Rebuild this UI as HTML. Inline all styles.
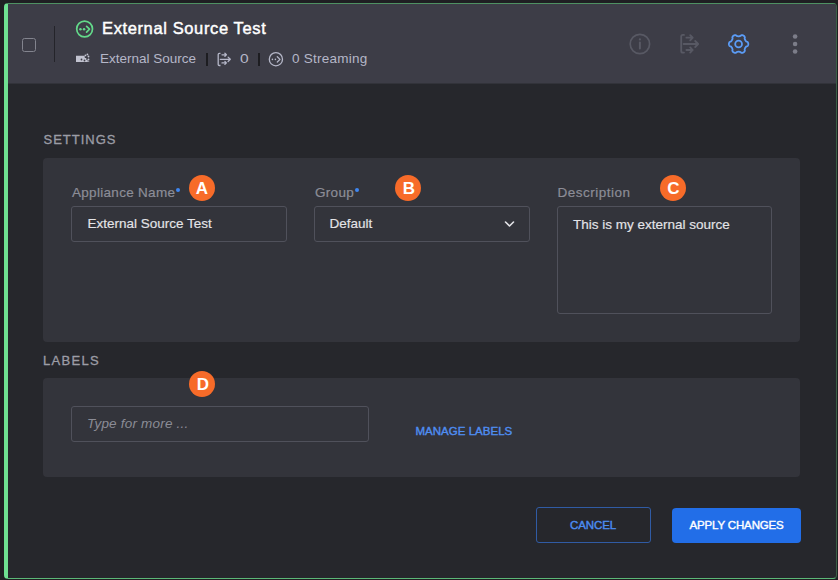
<!DOCTYPE html>
<html><head><meta charset="utf-8">
<style>
*{box-sizing:border-box;margin:0;padding:0}
html,body{width:838px;height:580px;overflow:hidden;background:#1f1f22;font-family:"Liberation Sans",sans-serif}
.abs{position:absolute}
.t{position:absolute;white-space:pre;line-height:1}
#card{position:absolute;left:4px;top:3px;width:833px;height:576px;border:1px solid #4e9162;border-right-color:#3b6147;border-bottom-color:#5bb777;border-left:4px solid #6fe091;border-radius:4px;background:#26272c;overflow:hidden}
#hdr{position:absolute;left:0;top:0;width:828px;height:80px;background:linear-gradient(#3d3d47 0,#3d3d47 79px,#32333a 79px)}
.panel{position:absolute;background:#33343b;border-radius:4px}
.inp{position:absolute;border:1px solid #50515b;border-radius:3px}
.badge{position:absolute;width:26px;height:26px;border-radius:50%;background:#f76b29;color:#fff;font-weight:700;font-size:17px;line-height:27px;text-align:center}
.lbl{color:#8c8d97;font-size:13.5px;letter-spacing:0.3px;-webkit-text-stroke:0.2px #8c8d97}
.req{position:absolute;width:4px;height:4px;border-radius:50%;background:#3f86f0}
.sec{color:#9c9da6;font-size:13px;letter-spacing:1px;-webkit-text-stroke:0.3px #9c9da6}
.val{color:#e4e4e8;font-size:13.5px;-webkit-text-stroke:0.15px #e4e4e8}
.sub{color:#b5b7c8;font-size:13.5px}
</style></head>
<body>
<div id="card"><div id="hdr"></div></div>

<!-- checkbox -->
<div class="abs" style="left:22px;top:38px;width:14px;height:14px;border:1.5px solid #83848e;border-radius:2.5px"></div>
<div class="abs" style="left:54px;top:26px;width:1px;height:36px;background:#24242a"></div>

<!-- title icon -->
<svg class="abs" style="left:74px;top:18px" width="22" height="22" viewBox="0 0 22 22">
  <circle cx="10.6" cy="11" r="7.9" fill="none" stroke="#63d98a" stroke-width="1.7"/>
  <circle cx="6.45" cy="11.2" r="1.25" fill="#63d98a"/>
  <circle cx="10.05" cy="11.2" r="1.25" fill="#63d98a"/>
  <path d="M12.6 8.4 L15.5 11.2 L12.6 14.1" fill="none" stroke="#63d98a" stroke-width="1.7" stroke-linecap="round" stroke-linejoin="round"/>
</svg>
<div class="t" style="left:102px;top:19.7px;font-size:16.5px;font-weight:400;letter-spacing:0.62px;-webkit-text-stroke:0.45px #fff;color:#fff">External Source Test</div>

<!-- subtitle -->
<svg class="abs" style="left:72px;top:50px" width="22" height="16" viewBox="0 0 22 16">
  <path d="M4 5.8 H12 L17.5 12 H4 Z" fill="#c2c3d0"/>
  <circle cx="9.5" cy="9.5" r="0.9" fill="#3d3d47"/>
  <circle cx="12.5" cy="10.5" r="0.9" fill="#3d3d47"/>
  <rect x="12.8" y="6.8" width="1.2" height="1.2" fill="#3d3d47"/>
  <rect x="14.2" y="8.6" width="1.2" height="1.2" fill="#3d3d47"/>
  <rect x="15.6" y="10.2" width="1.2" height="1.2" fill="#3d3d47"/>
  <circle cx="13.4" cy="5.4" r="0.9" fill="#c2c3d0"/>
  <circle cx="15.4" cy="4.4" r="0.9" fill="#c2c3d0"/>
  <circle cx="16.5" cy="6.5" r="0.9" fill="#c2c3d0"/>
  <circle cx="16.5" cy="9.5" r="0.9" fill="#c2c3d0"/>
</svg>
<div class="t sub" style="left:100px;top:51.6px">External Source</div>
<div class="abs" style="left:206px;top:52.5px;width:2px;height:13.5px;background:#1d1d21"></div>
<svg class="abs" style="left:212px;top:50px" width="22" height="18" viewBox="0 0 22 18">
  <path d="M8.5 3.3 H7.3 Q6.2 3.3 6.2 4.4 V14.4 Q6.2 15.5 7.3 15.5 H8.5" fill="none" stroke="#b5b7c8" stroke-width="1.3"/>
  <path d="M8.3 9.3 H18.2 M16.1 7.1 L18.3 9.3 L16.1 11.5 M10 4.8 H14.3 M12.9 3.3 L14.4 4.8 L12.9 6.3 M10 12.9 H14.3 M12.9 11.4 L14.4 12.9 L12.9 14.4" fill="none" stroke="#b5b7c8" stroke-width="1.3" stroke-linecap="round" stroke-linejoin="round"/>
</svg>
<div class="t sub" style="left:240px;top:51.6px;transform:scaleX(1.15);transform-origin:0 0">0</div>
<div class="abs" style="left:258px;top:52.5px;width:2px;height:13.5px;background:#1d1d21"></div>
<svg class="abs" style="left:266px;top:50px" width="20" height="18" viewBox="0 0 20 18">
  <circle cx="9.9" cy="9.2" r="6.6" fill="none" stroke="#b5b7c8" stroke-width="1.3"/>
  <circle cx="6.4" cy="9.4" r="0.8" fill="#b5b7c8"/>
  <circle cx="9.4" cy="9.4" r="0.8" fill="#b5b7c8"/>
  <path d="M11.3 6.8 L14 9.4 L11.3 12" fill="none" stroke="#b5b7c8" stroke-width="1.3" stroke-linecap="round" stroke-linejoin="round"/>
</svg>
<div class="t sub" style="left:292px;top:51.6px;letter-spacing:0.25px">0 Streaming</div>

<!-- right icons -->
<svg class="abs" style="left:620px;top:24px" width="40" height="40" viewBox="0 0 40 40">
  <circle cx="19.9" cy="20" r="9.7" fill="none" stroke="#585964" stroke-width="1.7"/>
  <circle cx="19.9" cy="15.4" r="1.1" fill="#585964"/>
  <path d="M19.9 18.6 V24.6" stroke="#585964" stroke-width="2" stroke-linecap="round"/>
</svg>
<svg class="abs" style="left:670px;top:24px" width="40" height="40" viewBox="0 0 40 40">
  <path d="M14 10.9 H12.9 Q11.2 10.9 11.2 12.6 V26.9 Q11.2 28.6 12.9 28.6 H14" fill="none" stroke="#585964" stroke-width="1.8" stroke-linecap="round"/>
  <path d="M13.6 20 H28.2 M25.2 17 L28.2 20 L25.2 23 M16.4 13.7 H22.7 M20.2 11.1 L22.7 13.7 L20.2 16.3 M16.4 26 H22.7 M20.2 23.4 L22.7 26 L20.2 28.6" fill="none" stroke="#585964" stroke-width="1.8" stroke-linecap="round" stroke-linejoin="round"/>
</svg>
<svg class="abs" style="left:718px;top:24px" width="40" height="40" viewBox="0 0 40 40">
  <path fill="none" stroke="#5b9cf6" stroke-width="1.8" stroke-linejoin="round" d="M30.3 20.0L30.3 20.3L30.2 20.7L30.1 21.0L30.0 21.3L29.9 21.6L29.7 21.9L29.4 22.2L28.7 22.3L28.3 22.5L28.1 22.7L27.9 23.0L27.7 23.2L27.6 23.4L27.4 23.6L27.3 23.8L27.1 24.1L27.0 24.3L26.9 24.6L26.8 24.9L26.7 25.1L26.7 25.4L26.6 25.8L26.9 26.5L26.8 26.9L26.6 27.2L26.5 27.5L26.2 27.8L26.0 28.0L25.7 28.2L25.5 28.4L25.1 28.6L24.8 28.7L24.5 28.8L24.2 28.8L23.8 28.8L23.5 28.8L23.1 28.7L22.6 28.1L22.3 28.0L22.0 27.9L21.7 27.8L21.4 27.8L21.1 27.7L20.9 27.7L20.6 27.7L20.3 27.7L20.1 27.7L19.8 27.8L19.5 27.8L19.2 27.9L18.9 28.0L18.6 28.1L18.1 28.7L17.7 28.8L17.4 28.8L17.0 28.8L16.7 28.8L16.4 28.7L16.1 28.6L15.8 28.4L15.5 28.2L15.2 28.0L15.0 27.8L14.7 27.5L14.6 27.2L14.4 26.9L14.3 26.5L14.6 25.8L14.5 25.4L14.5 25.1L14.4 24.9L14.3 24.6L14.2 24.3L14.1 24.1L13.9 23.8L13.8 23.6L13.6 23.4L13.5 23.2L13.3 23.0L13.1 22.7L12.9 22.5L12.5 22.3L11.8 22.2L11.5 21.9L11.3 21.6L11.2 21.3L11.1 21.0L11.0 20.7L10.9 20.3L10.9 20.0L10.9 19.7L11.0 19.3L11.1 19.0L11.2 18.7L11.3 18.4L11.5 18.1L11.8 17.8L12.5 17.7L12.9 17.5L13.1 17.3L13.3 17.0L13.5 16.8L13.6 16.6L13.8 16.4L13.9 16.1L14.1 15.9L14.2 15.7L14.3 15.4L14.4 15.1L14.5 14.9L14.5 14.6L14.6 14.2L14.3 13.5L14.4 13.1L14.6 12.8L14.7 12.5L15.0 12.2L15.2 12.0L15.5 11.8L15.7 11.6L16.1 11.4L16.4 11.3L16.7 11.2L17.0 11.2L17.4 11.2L17.7 11.2L18.1 11.3L18.6 11.9L18.9 12.0L19.2 12.1L19.5 12.2L19.8 12.2L20.1 12.3L20.3 12.3L20.6 12.3L20.9 12.3L21.1 12.3L21.4 12.2L21.7 12.2L22.0 12.1L22.3 12.0L22.6 11.9L23.1 11.3L23.5 11.2L23.8 11.2L24.2 11.2L24.5 11.2L24.8 11.3L25.1 11.4L25.5 11.6L25.7 11.8L26.0 12.0L26.2 12.2L26.5 12.5L26.6 12.8L26.8 13.1L26.9 13.5L26.6 14.2L26.7 14.6L26.7 14.9L26.8 15.1L26.9 15.4L27.0 15.7L27.1 15.9L27.3 16.1L27.4 16.4L27.6 16.6L27.7 16.8L27.9 17.0L28.1 17.3L28.3 17.5L28.7 17.7L29.4 17.8L29.7 18.1L29.9 18.4L30.0 18.7L30.1 19.0L30.2 19.3L30.3 19.7Z"/>
  <circle cx="20.6" cy="20" r="3.4" fill="none" stroke="#5b9cf6" stroke-width="1.8"/>
</svg>
<svg class="abs" style="left:785px;top:30px" width="20" height="28" viewBox="0 0 20 28">
  <circle cx="10.1" cy="6.5" r="2.3" fill="#7c7d89"/>
  <circle cx="10.1" cy="14" r="2.3" fill="#7c7d89"/>
  <circle cx="10.1" cy="21.5" r="2.3" fill="#7c7d89"/>
</svg>

<!-- SETTINGS -->
<div class="t sec" style="left:43.5px;top:133px">SETTINGS</div>
<div class="panel" style="left:43px;top:158px;width:757px;height:184px"></div>

<div class="t lbl" style="left:72px;top:185.6px">Appliance Name</div>
<div class="req" style="left:176px;top:188px"></div>
<div class="badge" style="left:189px;top:175px">A</div>
<div class="inp" style="left:71px;top:206px;width:216px;height:36px"></div>
<div class="t val" style="left:87.5px;top:216.5px">External Source Test</div>

<div class="t lbl" style="left:315px;top:185.6px">Group</div>
<div class="req" style="left:355px;top:188px"></div>
<div class="badge" style="left:395px;top:175px;padding-left:2px">B</div>
<div class="inp" style="left:314px;top:206px;width:216px;height:36px"></div>
<div class="t val" style="left:329.5px;top:216.5px">Default</div>
<svg class="abs" style="left:503px;top:219px" width="13" height="10" viewBox="0 0 13 10">
  <path d="M2.5 3 L6.5 7 L10.5 3" fill="none" stroke="#e4e4e8" stroke-width="1.6" stroke-linecap="round" stroke-linejoin="round"/>
</svg>

<div class="t lbl" style="left:557.5px;top:185.6px;letter-spacing:0.5px">Description</div>
<div class="badge" style="left:660px;top:175px;padding-left:1px">C</div>
<div class="inp" style="left:557px;top:206px;width:215px;height:108px"></div>
<div class="t val" style="left:573px;top:217.5px">This is my external source</div>

<!-- LABELS -->
<div class="t sec" style="left:43px;top:354px;letter-spacing:1.3px">LABELS</div>
<div class="panel" style="left:43px;top:378px;width:757px;height:99px"></div>
<div class="badge" style="left:189px;top:371px;padding-left:2px">D</div>
<div class="inp" style="left:71px;top:406px;width:298px;height:36px"></div>
<div class="t" style="left:87px;top:417px;font-size:13.5px;font-style:italic;color:#8b8c96;letter-spacing:0.2px">Type for more ...</div>
<div class="t" style="left:415.5px;top:425.8px;font-size:11.5px;font-weight:400;letter-spacing:0.02px;-webkit-text-stroke:0.4px #4f8ef2;color:#4f8ef2">MANAGE LABELS</div>

<!-- buttons -->
<div class="abs" style="left:536px;top:507px;width:115px;height:36px;border:1px solid #305ba4;border-radius:3px"></div>
<div class="t" style="left:570px;top:519.5px;font-size:11.5px;font-weight:400;letter-spacing:-0.1px;-webkit-text-stroke:0.4px #4c8cf2;color:#4c8cf2">CANCEL</div>
<div class="abs" style="left:672px;top:508px;width:129px;height:35px;background:#226ee8;border-radius:4px"></div>
<div class="t" style="left:689.5px;top:519.5px;font-size:11.5px;font-weight:400;letter-spacing:-0.15px;-webkit-text-stroke:0.4px #fff;color:#fff">APPLY CHANGES</div>
</body></html>
